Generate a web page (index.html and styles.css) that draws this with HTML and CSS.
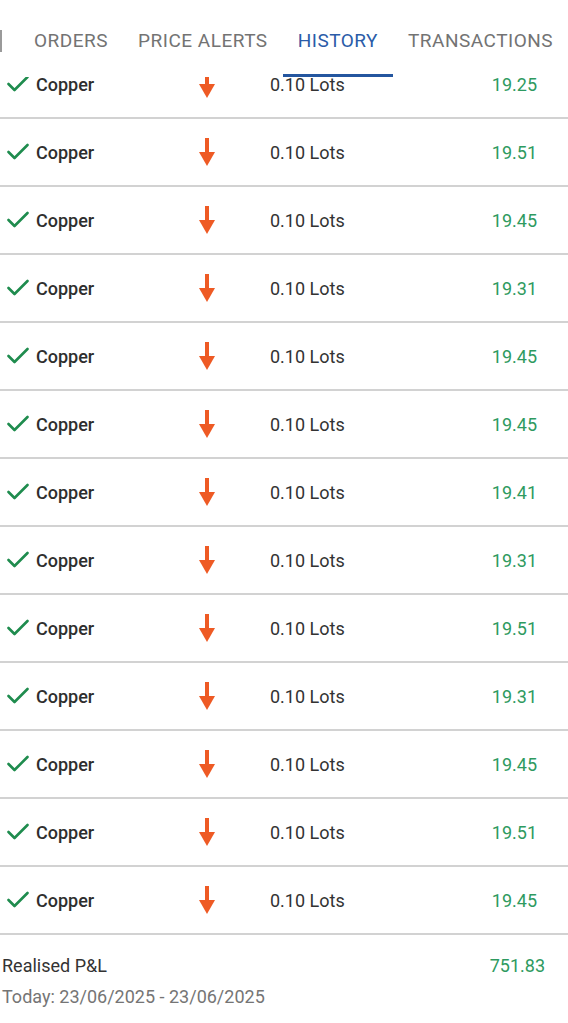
FILE: index.html
```html
<!DOCTYPE html>
<html lang="en">
<head>
    <meta charset="UTF-8">
    <meta name="viewport" content="width=device-width, initial-scale=1.0">
    <title>History</title>
    <link rel="stylesheet" href="styles.css">
</head>
<body>
    <div class="page">
        <!-- Tab bar sits over the scrolled list -->
        <div class="tabs">
            <span class="edge"></span>
            <div class="tab tab-orders">ORDERS</div>
            <div class="tab tab-alerts">PRICE ALERTS</div>
            <div class="tab tab-history active">HISTORY</div>
            <div class="tab tab-trans">TRANSACTIONS</div>
        </div>

        <div class="history-list" id="history-list">
            <!-- rows are added by the script below -->
        </div>

        <div class="summary">
            <div class="summary-line">
                <span class="summary-label">Realised P&amp;L</span>
                <span class="summary-value">751.83</span>
            </div>
            <div class="summary-date">Today: 23/06/2025 - 23/06/2025</div>
        </div>
    </div>

    <script>
        const values = ['19.25', '19.51', '19.45', '19.31', '19.45', '19.45', '19.41',
                        '19.31', '19.51', '19.31', '19.45', '19.51', '19.45'];

        const checkIcon = '<svg class="check" width="22" height="18" viewBox="0 0 22 18"><polyline points="1.5,9 7.5,15 20.5,2" fill="none" stroke="#1f8c4e" stroke-width="2.6" stroke-linecap="round" stroke-linejoin="round"/></svg>';
        const arrowIcon = '<svg class="arrow" width="18" height="28" viewBox="0 0 18 28"><rect x="7" y="0" width="4" height="16" fill="#ee5a24"/><polygon points="1,14 17,14 9,28" fill="#ee5a24"/></svg>';

        const list = document.getElementById('history-list');
        values.forEach(function (v) {
            const row = document.createElement('div');
            row.classList.add('row');
            row.innerHTML = `
                <div class="name">${checkIcon}<span>Copper</span></div>
                <div class="dir">${arrowIcon}</div>
                <div class="lots">0.10 Lots</div>
                <div class="value">${v}</div>
            `;
            list.appendChild(row);
        });
    </script>
</body>
</html>
```

FILE: styles.css
```css
body {
    font-family: Roboto, "Noto Sans", Arial, sans-serif;
    margin: 0;
    padding: 0;
    background: #fff;
    color: #333;
}

.page {
    position: relative;
    width: 568px;
    height: 1023px;
    overflow: hidden;
}

.tabs {
    position: absolute;
    top: 0;
    left: 0;
    right: 0;
    height: 77px;
    background: #fff;
    display: flex;
    align-items: flex-end;
    z-index: 2;
}

.tabs .edge {
    position: absolute;
    left: 0;
    top: 30px;
    width: 2px;
    height: 22px;
    background: #9a9a9a;
}

.tab {
    font-size: 19px;
    letter-spacing: 0.5px;
    line-height: 22px;
    color: #737373;
    padding: 30px 0 22px;
    border-bottom: 3px solid transparent;
    white-space: nowrap;
}

.tab-orders {
    margin-left: 34px;
}

.tab-alerts {
    margin-left: 30px;
}

.tab-history {
    margin-left: 15px;
    padding-left: 15px;
    padding-right: 15px;
}

.tab-trans {
    margin-left: 15px;
}

.tab.active {
    color: #2b5ca8;
    border-bottom-color: #24569f;
}

.history-list {
    margin-top: 51px;
}

.row {
    display: flex;
    align-items: center;
    height: 66px;
    border-bottom: 2px solid #d2d2d2;
    font-size: 18px;
}

.name {
    display: flex;
    align-items: center;
    width: 191px;
    padding-left: 7px;
    font-weight: 500;
    color: #2e2e2e;
}

.check {
    margin-right: 7px;
}

.dir {
    width: 72px;
    display: flex;
    align-items: center;
}

.lots {
    flex: 1;
    color: #333;
}

.value {
    padding-right: 31px;
    color: #2e9a60;
}

.summary {
    padding: 20px 23px 0 2px;
    font-size: 18px;
}

.summary-line {
    display: flex;
    justify-content: space-between;
    line-height: 22px;
}

.summary-label {
    color: #333;
}

.summary-value {
    color: #2e9a60;
}

.summary-date {
    margin-top: 9px;
    line-height: 22px;
    color: #757575;
}
```
